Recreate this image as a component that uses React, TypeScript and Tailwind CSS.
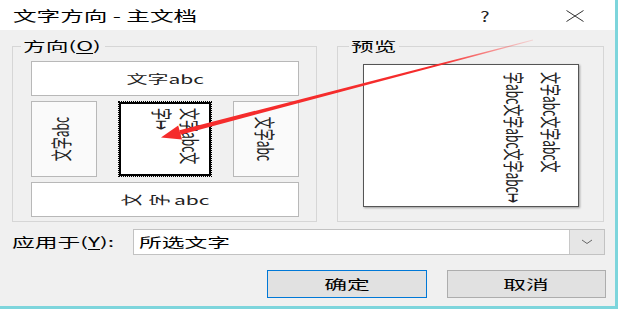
import React from 'react';

// the screenshot is stretched sideways, so text is widened to match
const Wide = ({ children, className = '' }: { children: React.ReactNode; className?: string }) => (
  <span className={`inline-block scale-x-[1.75] whitespace-nowrap ${className}`}>{children}</span>
);

const vertical = '[writing-mode:vertical-rl] [text-orientation:sideways]';

export default function App() {
  return (
    <div className="flex h-[309px] w-[620px] bg-white font-['Noto_Sans_CJK_SC',sans-serif] text-[13px] text-black">
      <div className="relative flex h-[309px] w-[618px] flex-col border-r-[3px] border-b-[3px] border-[#7dd5dc]">
        {/* 标题栏 */}
        <div className="flex h-[30px] shrink-0 items-center bg-white pt-[2px]">
          <Wide className="ml-[13px] origin-left text-[13.5px] leading-none">文字方向 - 主文档</Wide>
          <span className="ml-auto inline-block w-[10px] scale-x-[1.4] text-center text-[14px] leading-none text-[#222]">?</span>
          <svg className="ml-[76px] mr-[31px]" width="18" height="12" viewBox="0 0 18 12">
            <path d="M0.5 0.5 L17.5 11.5 M0.5 11.5 L17.5 0.5" stroke="#333" strokeWidth="1" fill="none" />
          </svg>
        </div>

        <div className="flex flex-1 flex-col bg-[#f0f0f0]">
          <div className="flex gap-[20px] pl-[12px] pt-[8px]">
            {/* 方向 */}
            <fieldset className="h-[184px] w-[305px] border border-[#d6d6d6]">
              <legend className="ml-[8px] h-[16px] w-[84px] px-[2px] leading-[16px]">
                <Wide className="origin-left">
                  方向(<span className="underline underline-offset-2">O</span>)
                </Wide>
              </legend>
              <div className="flex flex-col gap-[5px] pl-[18px] pr-[17px] pt-[7px] text-[12px] text-[#222]">
                <div className="flex h-[35px] items-center justify-center border border-[#b8b8b8] bg-white">
                  <Wide>文字abc</Wide>
                </div>
                <div className="flex h-[76px] justify-between">
                  <div className="flex w-[66px] items-center justify-center border border-[#b8b8b8] bg-[#fafafa]">
                    <Wide className="pr-[4px]">
                      <span className="inline-block -rotate-90">文字abc</span>
                    </Wide>
                  </div>
                  <div className="w-[94px] border border-dotted border-black">
                    <div className="flex h-full justify-end border-2 border-black bg-white pr-[4px] pt-[4px]">
                      <Wide className="origin-right">
                        <span className={`inline-block leading-[16px] ${vertical}`}>
                          文字abc文
                          <br />
                          字↦
                        </span>
                      </Wide>
                    </div>
                  </div>
                  <div className="flex w-[66px] items-center justify-center border border-[#b8b8b8] bg-[#fafafa]">
                    <Wide>
                      <span className="inline-block rotate-90">文字abc</span>
                    </Wide>
                  </div>
                </div>
                <div className="flex h-[35px] items-center justify-center border border-[#b8b8b8] bg-white">
                  <Wide className="flex items-center">
                    <span className="inline-block h-[12px] w-[12px] -rotate-90 leading-[12px]">文</span>
                    <span className="ml-[4px] inline-block h-[12px] w-[12px] -rotate-90 leading-[12px]">字</span>
                    <span className="ml-[3px]">abc</span>
                  </Wide>
                </div>
              </div>
            </fieldset>

            {/* 预览 */}
            <fieldset className="h-[184px] w-[267px] border border-[#d6d6d6]">
              <legend className="ml-[11px] h-[16px] w-[50px] px-[2px] leading-[16px]">
                <Wide className="origin-left">预览</Wide>
              </legend>
              <div className="pl-[25px] pt-[10px]">
                <div className="flex h-[143px] w-[216px] justify-end border border-[#555] bg-white pr-[7px] pt-[7px] shadow-[1px_1px_2px_rgba(0,0,0,0.35)]">
                  <Wide className="origin-right text-[12px] text-[#222]">
                    <span className={`inline-block leading-[21px] ${vertical}`}>
                      文字abc文字abc文
                      <br />
                      字abc文字abc文字abc↦
                    </span>
                  </Wide>
                </div>
              </div>
            </fieldset>
          </div>

          {/* 应用于 */}
          <div className="mt-[7px] flex h-[26px] items-center">
            <div className="w-[133px] pl-[12px]">
              <Wide className="origin-left">
                应用于(<span className="underline underline-offset-2">Y</span>):
              </Wide>
            </div>
            <div className="flex h-[26px] w-[472px] border border-[#c2c2c2] bg-white">
              <div className="flex flex-1 items-center pl-[5px]">
                <Wide className="origin-left">所选文字</Wide>
              </div>
              <div className="flex w-[35px] items-center justify-center border-l border-[#c8c8c8] bg-[#e6e6e6]">
                <svg width="12" height="6" viewBox="0 0 12 6">
                  <path d="M1 1 L6 4.5 L11 1" stroke="#666" strokeWidth="1" fill="none" />
                </svg>
              </div>
            </div>
          </div>

          {/* 按钮 */}
          <div className="ml-[267px] mt-[15px] flex gap-[20px]">
            <button className="flex h-[28px] w-[160px] items-center justify-center border border-[#0078d7] bg-[#e1e1e1]">
              <Wide>确定</Wide>
            </button>
            <button className="flex h-[28px] w-[159px] items-center justify-center border border-[#adadad] bg-[#e1e1e1]">
              <Wide>取消</Wide>
            </button>
          </div>
        </div>

        {/* 红色箭头标注 */}
        <svg className="pointer-events-none absolute left-0 top-0" width="618" height="309" viewBox="0 0 618 309">
          <defs>
            <linearGradient id="fade" gradientUnits="userSpaceOnUse" x1="533" y1="40" x2="440" y2="64">
              <stop offset="0" stopColor="#ff3b3b" stopOpacity="0.15" />
              <stop offset="1" stopColor="#f52c2c" stopOpacity="1" />
            </linearGradient>
          </defs>
          <polygon points="533.1,40.5 532.9,39.5 179.4,130.3 180.6,134.7" fill="url(#fade)" />
          <polygon points="161,137.4 182,139.6 178.2,125.4" fill="#f52c2c" />
        </svg>
      </div>
    </div>
  );
}
